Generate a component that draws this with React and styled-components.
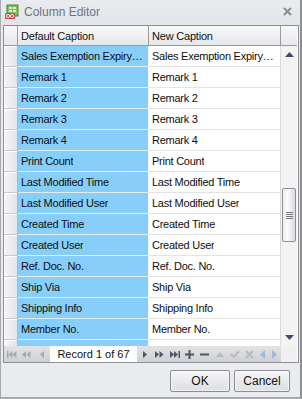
import React from "react";
import styled, { createGlobalStyle } from "styled-components";

const GlobalStyle = createGlobalStyle`
  html, body {
    margin: 0;
    padding: 0;
    background: #ffffff;
  }
  * {
    box-sizing: border-box;
  }
`;

const Window = styled.div`
  width: 302px;
  height: 399px;
  display: flex;
  flex-direction: column;
  background: #eaebee;
  border-left: 1px solid #a8a9ad;
  border-right: 2px solid #8d8e92;
  border-bottom: 2px solid #a8a9ad;
  font-family: "Liberation Sans", Arial, sans-serif;
  overflow: hidden;
`;

const TitleBar = styled.div`
  height: 25px;
  flex: none;
  display: flex;
  align-items: center;
  padding: 0 8px 2px 3px;
  gap: 4px;
  background: linear-gradient(#e9ebef, #e2e5ea);
`;

const Title = styled.span`
  flex: 1;
  font-size: 12px;
  color: #70747c;
  padding-top: 1px;
`;

const Grid = styled.div`
  height: 338px;
  flex: none;
  margin: 0 1px 0 2px;
  border: 1px solid #8e8f93;
  display: flex;
  flex-direction: column;
  background: #ffffff;
`;

const Row = styled.div`
  display: flex;
  height: ${(p) => p.h}px;
  flex: none;
`;

const HeaderCell = styled.div`
  width: ${(p) => p.w}px;
  flex: none;
  display: flex;
  align-items: center;
  padding-left: 3px;
  font-size: 11px;
  letter-spacing: -0.2px;
  color: #111111;
  background: linear-gradient(#f8f8f9, #e7e8eb);
  border-right: 1px solid #9a9b9f;
  border-bottom: 1px solid #9a9b9f;
  &:last-child {
    border-right: none;
  }
`;

const Body = styled.div`
  height: 300px;
  flex: none;
  display: flex;
  overflow: hidden;
`;

const Rows = styled.div`
  width: 277px;
  flex: none;
  display: flex;
  flex-direction: column;
  overflow: hidden;
`;

const Indicator = styled.div`
  width: 14px;
  flex: none;
  background: linear-gradient(90deg, #f6f6f7, #e4e5e8);
  border-right: 1px solid #b4b5b9;
  border-bottom: 1px solid #c9cacd;
  box-shadow: inset 1px 1px 0 #ffffff;
`;

const Cell = styled.div`
  width: ${(p) => p.w}px;
  flex: none;
  display: flex;
  align-items: center;
  padding: 0 2px 0 3px;
  font-size: 11px;
  letter-spacing: -0.25px;
  color: #0e0e0e;
  background: ${(p) => (p.selected ? "#87cefa" : "#ffffff")};
  border-right: 1px solid ${(p) => (p.selected ? "#eef5fb" : "#d9d9d9")};
  border-bottom: 1px solid ${(p) => (p.selected ? "#e3eef7" : "#e4e4e4")};
  overflow: hidden;
`;

const CellText = styled.span`
  white-space: nowrap;
  overflow: hidden;
`;

const ScrollBar = styled.div`
  width: 16px;
  flex: none;
  display: flex;
  flex-direction: column;
  background: #f3f3f4;
`;

const ScrollButton = styled.div`
  height: 17px;
  flex: none;
  display: flex;
  align-items: center;
  justify-content: center;
`;

const Track = styled.div`
  flex: 1;
  display: flex;
  flex-direction: column;
  padding-top: 125px;
  align-items: center;
`;

const Thumb = styled.div`
  width: 14px;
  height: 54px;
  border: 1px solid #8f9094;
  border-radius: 2px;
  background: linear-gradient(90deg, #eeeeef, #fbfbfb 40%, #d9dadc);
  display: flex;
  flex-direction: column;
  align-items: center;
  justify-content: center;
  gap: 1px;
`;

const Grip = styled.span`
  width: 7px;
  height: 1px;
  background: #77787c;
`;

const NavRow = styled.div`
  height: 16px;
  flex: none;
  display: flex;
`;

const Navigator = styled.div`
  width: 277px;
  flex: none;
  display: flex;
  align-items: stretch;
  background: linear-gradient(#e3e3e4, #cfd0d2);
`;

const NavButton = styled.div`
  width: ${(p) => p.w || 15}px;
  flex: none;
  display: flex;
  align-items: center;
  justify-content: center;
`;

const RecordBox = styled.div`
  width: 87px;
  flex: none;
  margin-left: 1px;
  background: #ffffff;
  display: flex;
  align-items: center;
  justify-content: center;
  font-size: 11px;
  color: #111111;
`;

const Corner = styled.div`
  width: 16px;
  flex: none;
  background: #f0f0f1;
`;

const Footer = styled.div`
  flex: 1;
  display: flex;
  justify-content: flex-end;
  align-items: flex-start;
  padding: 7px 10px 0 0;
  gap: 4px;
`;

const Button = styled.button`
  width: ${(p) => p.w}px;
  height: 22px;
  padding: 0;
  font-family: "Liberation Sans", Arial, sans-serif;
  font-size: 12px;
  color: #111111;
  border: 1px solid #8c8d91;
  border-radius: 2px;
  background: linear-gradient(#f5f5f6, #dedfe2);
  box-shadow: inset 0 0 0 1px #ffffff80;
`;

const DARK = "#4b5567";
const OFF = "#a6a8ad";
const PALE = "#b9bbc0";
const BLUE = "#a2b6d6";

const Tri = ({ dir = "right", color, x = 0 }) => {
  const pts = dir === "right" ? `${x},0 ${x + 4},3.5 ${x},7` : `${x + 4},0 ${x},3.5 ${x + 4},7`;
  return <polygon points={pts} fill={color} />;
};

const Icon = ({ w = 10, h = 7, children }) => (
  <svg width={w} height={h} viewBox={`0 0 ${w} ${h}`}>
    {children}
  </svg>
);

const records = [
  "Sales Exemption Expiry\u2026",
  "Remark 1",
  "Remark 2",
  "Remark 3",
  "Remark 4",
  "Print Count",
  "Last Modified Time",
  "Last Modified User",
  "Created Time",
  "Created User",
  "Ref. Doc. No.",
  "Ship Via",
  "Shipping Info",
  "Member No.",
  "",
];

const AppIcon = () => (
  <svg width="16" height="16" viewBox="0 0 16 16">
    <rect x="3" y="1" width="11" height="11" fill="#7fc062" stroke="#3f8a34" />
    <rect x="5" y="3" width="3" height="2" fill="#d8f0c8" />
    <rect x="9" y="3" width="3" height="2" fill="#d8f0c8" />
    <rect x="5" y="6" width="3" height="2" fill="#d8f0c8" />
    <rect x="9" y="6" width="3" height="2" fill="#d8f0c8" />
    <rect x="1" y="9" width="10" height="6" rx="1.5" fill="#e0383a" />
    <circle cx="4" cy="12" r="1.6" fill="none" stroke="#ffffff" strokeWidth="1" />
    <circle cx="8" cy="12" r="1.6" fill="none" stroke="#ffffff" strokeWidth="1" />
  </svg>
);

const CloseIcon = () => (
  <svg width="9" height="9" viewBox="0 0 9 9">
    <path d="M1 1 L8 8 M8 1 L1 8" stroke="#8b8c90" strokeWidth="2" />
  </svg>
);

export default function App() {
  return (
    <>
      <GlobalStyle />
      <Window>
        <TitleBar>
          <AppIcon />
          <Title>Column Editor</Title>
          <CloseIcon />
        </TitleBar>

        <Grid>
          <Row h={20}>
            <HeaderCell w={14} />
            <HeaderCell w={131}>Default Caption</HeaderCell>
            <HeaderCell w={132}>New Caption</HeaderCell>
            <HeaderCell w={16} />
          </Row>

          <Body>
            <Rows>
              {records.map((r, i) => (
                <Row h={21} key={i}>
                  <Indicator />
                  <Cell w={131} selected>
                    <CellText>{r}</CellText>
                  </Cell>
                  <Cell w={132}>
                    <CellText>{r}</CellText>
                  </Cell>
                </Row>
              ))}
            </Rows>
            <ScrollBar>
              <ScrollButton>
                <Icon w={9} h={5}>
                  <polygon points="0,5 4.5,0 9,5" fill="#3f4d6c" />
                </Icon>
              </ScrollButton>
              <Track>
                <Thumb>
                  <Grip />
                  <Grip />
                  <Grip />
                  <Grip />
                </Thumb>
              </Track>
              <ScrollButton>
                <Icon w={9} h={5}>
                  <polygon points="0,0 4.5,5 9,0" fill="#3f4d6c" />
                </Icon>
              </ScrollButton>
            </ScrollBar>
          </Body>

          <NavRow>
            <Navigator>
              <NavButton>
                <Icon w={10}>
                  <rect x="0" y="0" width="1.5" height="7" fill={OFF} />
                  <Tri dir="left" color={OFF} x={1.5} />
                  <Tri dir="left" color={OFF} x={5.5} />
                </Icon>
              </NavButton>
              <NavButton>
                <Icon w={9}>
                  <Tri dir="left" color={OFF} x={0} />
                  <Tri dir="left" color={OFF} x={4.5} />
                </Icon>
              </NavButton>
              <NavButton>
                <Icon w={4}>
                  <Tri dir="left" color={OFF} />
                </Icon>
              </NavButton>
              <RecordBox>Record 1 of 67</RecordBox>
              <NavButton>
                <Icon w={4}>
                  <Tri color={DARK} />
                </Icon>
              </NavButton>
              <NavButton>
                <Icon w={9}>
                  <Tri color={DARK} x={0} />
                  <Tri color={DARK} x={4.5} />
                </Icon>
              </NavButton>
              <NavButton>
                <Icon w={10}>
                  <Tri color={DARK} x={0} />
                  <Tri color={DARK} x={4} />
                  <rect x="8.5" y="0" width="1.5" height="7" fill={DARK} />
                </Icon>
              </NavButton>
              <NavButton>
                <Icon w={9} h={9}>
                  <path d="M4.5 0 V9 M0 4.5 H9" stroke={DARK} strokeWidth="2" />
                </Icon>
              </NavButton>
              <NavButton>
                <Icon w={9} h={9}>
                  <path d="M0 4.5 H9" stroke={DARK} strokeWidth="2" />
                </Icon>
              </NavButton>
              <NavButton>
                <Icon w={8} h={5}>
                  <polygon points="0,5 4,0 8,5" fill={PALE} />
                </Icon>
              </NavButton>
              <NavButton>
                <Icon w={10} h={8}>
                  <path d="M1 4 L4 7 L9 1" stroke={PALE} strokeWidth="2" fill="none" />
                </Icon>
              </NavButton>
              <NavButton>
                <Icon w={9} h={9}>
                  <path d="M1 1 L8 8 M8 1 L1 8" stroke={PALE} strokeWidth="2" />
                </Icon>
              </NavButton>
              <NavButton w={10}>
                <Icon w={5} h={9}>
                  <polygon points="5,0 0,4.5 5,9" fill={BLUE} />
                </Icon>
              </NavButton>
              <NavButton w={14}>
                <Icon w={5} h={9}>
                  <polygon points="0,0 5,4.5 0,9" fill={BLUE} />
                </Icon>
              </NavButton>
            </Navigator>
            <Corner />
          </NavRow>
        </Grid>

        <Footer>
          <Button w={60}>OK</Button>
          <Button w={56}>Cancel</Button>
        </Footer>
      </Window>
    </>
  );
}
